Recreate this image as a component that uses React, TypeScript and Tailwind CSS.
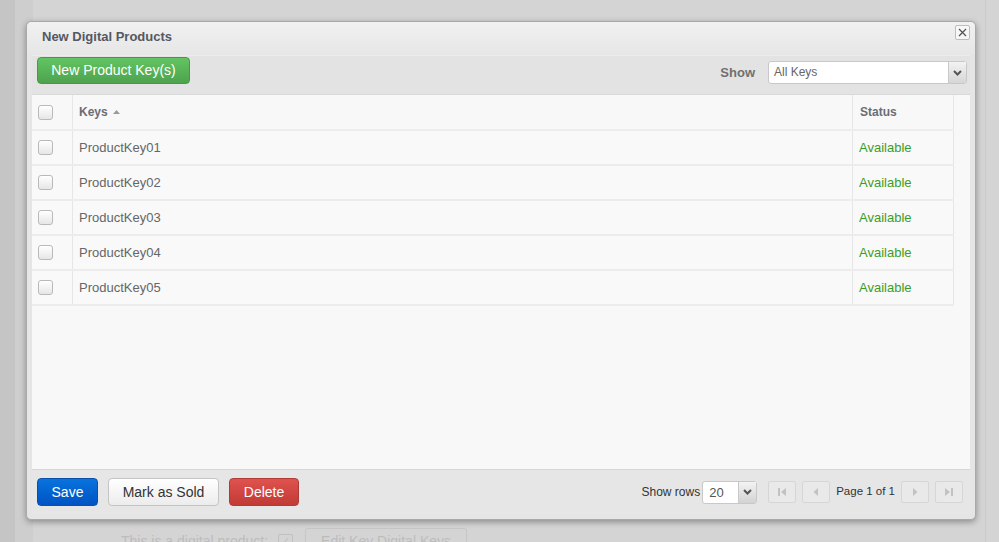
import React from "react";

const keys = ["ProductKey01", "ProductKey02", "ProductKey03", "ProductKey04", "ProductKey05"];

function Checkbox() {
  return (
    <span className="block w-[15px] h-[15px] rounded-[3px] border border-[#b9b9b9] bg-gradient-to-b from-white to-[#e6e6e6] shadow-[inset_0_1px_1px_rgba(255,255,255,0.8)]" />
  );
}

function ChevronDown() {
  return (
    <svg width="9" height="6" viewBox="0 0 9 6" fill="none">
      <path d="M1 1l3.5 3.5L8 1" stroke="#555" strokeWidth="2" />
    </svg>
  );
}

function PagerButton({ kind }: { kind: "first" | "prev" | "next" | "last" }) {
  return (
    <button className="w-[28px] h-[22px] flex items-center justify-center border border-[#d6d6d6] bg-[#e9e9e9] rounded-[2px]">
      <svg width="12" height="10" viewBox="0 0 12 10">
        {kind === "first" && (
          <>
            <rect x="2" y="1" width="2" height="8" fill="#c2c2c2" />
            <path d="M10 1v8L5 5z" fill="#c2c2c2" />
          </>
        )}
        {kind === "prev" && <path d="M8 1v8L3.5 5z" fill="#c2c2c2" />}
        {kind === "next" && <path d="M4 1v8l4.5-4z" fill="#c2c2c2" />}
        {kind === "last" && (
          <>
            <path d="M2 1v8l5-4z" fill="#c2c2c2" />
            <rect x="8" y="1" width="2" height="8" fill="#c2c2c2" />
          </>
        )}
      </svg>
    </button>
  );
}

export default function App() {
  return (
    <div
      className="relative w-[999px] h-[542px] overflow-hidden bg-[#d4d4d4] flex"
      style={{ fontFamily: '"Liberation Sans", Arial, sans-serif' }}
    >
      {/* page behind the overlay */}
      <div className="w-[15px] h-full bg-[#c5c5c5]" />
      <div className="w-[18px] h-full bg-[#cecece]" />
      <div className="flex-1 h-full flex flex-col">
        <div className="flex-1" />
        <div className="flex items-center h-[26px] -mb-[12px] pl-[88px] text-[14px] text-[#bcbcbc]">
          <span>This is a digital product:</span>
          <span className="ml-[10px] w-[15px] h-[15px] border border-[#c0c0c0] rounded-[2px] text-[11px] leading-[13px] text-center">✓</span>
          <span className="ml-[12px] h-[26px] px-[15px] border border-[#c6c6c6] rounded-[3px] flex items-center">
            Edit Key Digital Keys
          </span>
        </div>
      </div>
      <div className="w-[1px] h-full bg-[#cbcbcb] mr-[13px]" />

      {/* modal */}
      <div className="absolute left-[26px] top-[21px] w-[950px] h-[499px] flex flex-col rounded-[5px] border border-[#a9a9a9] bg-[#e5e5e5] shadow-[0_2px_6px_rgba(0,0,0,0.35)] px-[5px] pb-[5px]">
        <div className="h-[33px] flex items-start justify-between -mx-[5px] pl-[15px] pr-[5px] rounded-t-[5px] bg-gradient-to-b from-[#f1f1f1] to-[#e6e6e6]">
          <span className="mt-[5px] text-[13px] font-bold text-[#545862]">New Digital Products</span>
          <button className="mt-[3px] w-[15px] h-[15px] flex items-center justify-center border border-[#bdbdbd] bg-[#f7f7f7] rounded-[2px]">
            <svg width="9" height="9" viewBox="0 0 9 9">
              <path d="M1 1l7 7M8 1l-7 7" stroke="#555" strokeWidth="1.3" />
            </svg>
          </button>
        </div>

        {/* toolbar */}
        <div className="h-[39px] flex items-start justify-between pl-[5px] pr-[3px] bg-[#e3e3e3] border-t border-[#ececec]">
          <button className="mt-[1px] h-[27px] w-[153px] rounded-[4px] border border-[#449944] bg-gradient-to-b from-[#62c462] to-[#4ea34e] text-white text-[14px]">
            New Product Key(s)
          </button>
          <div className="mt-[5px] flex items-center">
            <span className="text-[13px] font-bold text-[#707070] mr-[13px]">Show</span>
            <div className="w-[199px] h-[23px] flex bg-white border border-[#c8c8c8] rounded-[3px]">
              <span className="flex-1 pl-[5px] text-[12px] leading-[21px] text-[#666]">All Keys</span>
              <span className="w-[18px] flex items-center justify-center border-l border-[#c8c8c8] bg-gradient-to-b from-[#f3f3f3] to-[#d6d6d6]">
                <ChevronDown />
              </span>
            </div>
          </div>
        </div>

        {/* table */}
        <div className="flex-1 bg-[#f8f8f8] border-t border-[#d9d9d9]">
          <div className="w-[922px] text-[13px]">
            <div className="flex h-[36px] border-b-2 border-[#ededed]">
              <div className="w-[41px] flex items-center pl-[6px] border-r border-[#e6e6e6]">
                <Checkbox />
              </div>
              <div className="flex-1 flex items-center pl-[6px] border-r border-[#e6e6e6] text-[12px] font-bold text-[#6b6d75]">
                Keys
                <svg className="ml-[5px]" width="7" height="4" viewBox="0 0 7 4">
                  <path d="M0 4L3.5 0 7 4z" fill="#9a9a9a" />
                </svg>
              </div>
              <div className="w-[101px] flex items-center pl-[7px] border-r border-[#e6e6e6] text-[12px] font-bold text-[#6b6d75]">
                Status
              </div>
            </div>
            {keys.map((k) => (
              <div key={k} className="flex h-[35px] border-b-2 border-[#ececec] bg-[#f9f9f9]">
                <div className="w-[41px] flex items-center pl-[6px] border-r border-[#e6e6e6]">
                  <Checkbox />
                </div>
                <div className="flex-1 flex items-center pl-[6px] border-r border-[#e6e6e6] text-[#666]">{k}</div>
                <div className="w-[101px] flex items-center pl-[6px] border-r border-[#e6e6e6] text-[#3c9d26]">
                  Available
                </div>
              </div>
            ))}
          </div>
        </div>

        {/* footer */}
        <div className="h-[45px] flex items-center justify-between pl-[5px] pr-[7px] bg-[#e6e6e6] border-t border-[#d6d6d6]">
          <div className="flex items-center gap-[10px]">
            <button className="h-[28px] w-[61px] rounded-[4px] border border-[#0a4fa8] bg-gradient-to-b from-[#0a73de] to-[#0053c2] text-white text-[14px]">
              Save
            </button>
            <button className="h-[28px] w-[111px] rounded-[4px] border border-[#c4c4c4] bg-gradient-to-b from-white to-[#ececec] text-[#333] text-[14px]">
              Mark as Sold
            </button>
            <button className="h-[28px] w-[70px] rounded-[4px] border border-[#b23a36] bg-gradient-to-b from-[#e0524e] to-[#c13a35] text-white text-[14px]">
              Delete
            </button>
          </div>
          <div className="flex items-center text-[12px] text-[#333]">
            <span className="mr-[2px]">Show rows</span>
            <div className="w-[55px] h-[23px] flex bg-white border border-[#c8c8c8] rounded-[3px]">
              <span className="flex-1 pl-[6px] text-[13px] leading-[21px] text-[#555]">20</span>
              <span className="w-[18px] flex items-center justify-center border-l border-[#c8c8c8] bg-gradient-to-b from-[#f3f3f3] to-[#d3d3d3]">
                <ChevronDown />
              </span>
            </div>
            <div className="ml-[11px] flex items-center gap-[6px]">
              <PagerButton kind="first" />
              <PagerButton kind="prev" />
              <span className="text-[11.5px] text-[#333]">Page 1 of 1</span>
              <PagerButton kind="next" />
              <PagerButton kind="last" />
            </div>
          </div>
        </div>
      </div>
    </div>
  );
}
